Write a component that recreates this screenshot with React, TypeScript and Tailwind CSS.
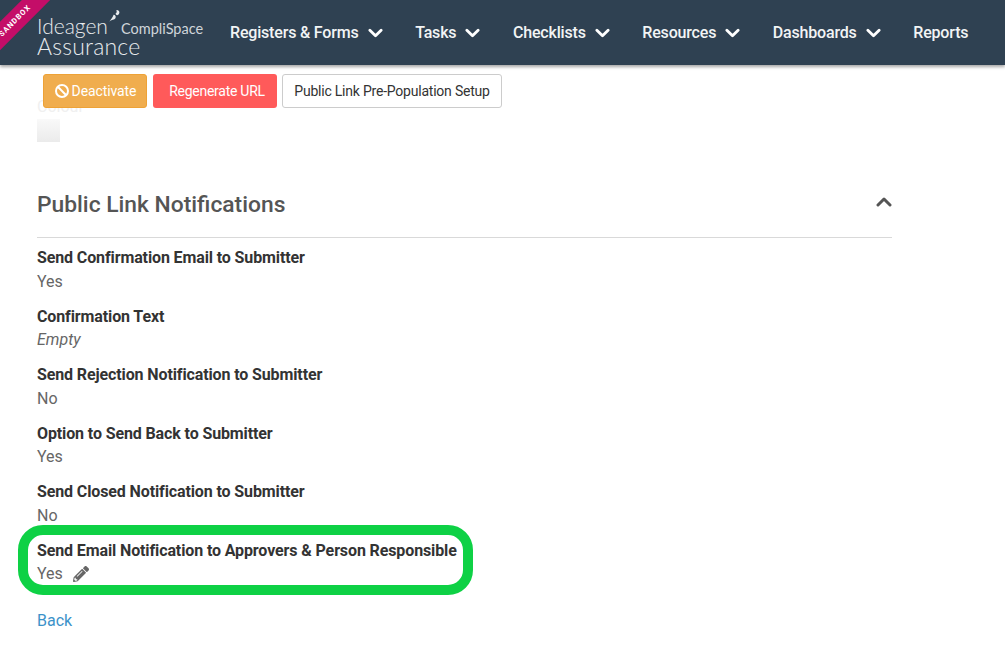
import React from "react";

const navItems: [string, boolean][] = [
  ["Registers & Forms", true],
  ["Tasks", true],
  ["Checklists", true],
  ["Resources", true],
  ["Dashboards", true],
  ["Reports", false],
];

const fields: [string, string][] = [
  ["Send Confirmation Email to Submitter", "Yes"],
  ["Confirmation Text", "Empty"],
  ["Send Rejection Notification to Submitter", "No"],
  ["Option to Send Back to Submitter", "Yes"],
  ["Send Closed Notification to Submitter", "No"],
  ["Send Email Notification to Approvers & Person Responsible", "Yes"],
];

function Chevron({ className }: { className: string }) {
  return (
    <svg viewBox="0 0 16 12" className={className} fill="none" stroke="currentColor" strokeWidth="3" strokeLinecap="round" strokeLinejoin="round">
      <path d="M2 3l6 6 6-6" />
    </svg>
  );
}

function Field({ label, value, last }: { label: string; value: string; last: boolean }) {
  return (
    <div className="h-[58.5px] pt-[1px]">
      <div className="text-[16px] leading-[23.5px] font-bold tracking-[-0.12px] text-[#333333]">{label}</div>
      <div className={`flex items-center text-[16px] leading-[23.5px] text-[#666666] ${value === "Empty" ? "italic" : ""}`}>
        {value}
        {last && (
          <svg viewBox="0 0 512 512" className="ml-[10px] h-[16px] w-[16px] text-[#666666]" fill="currentColor">
            <path d="M497.9 142.1l-46.1 46.1c-4.7 4.7-12.3 4.7-17 0l-111-111c-4.7-4.7-4.7-12.3 0-17l46.1-46.1c18.7-18.7 49.1-18.7 67.9 0l60.1 60.1c18.8 18.7 18.8 49.1 0 67.9zM284.2 99.8L21.6 362.4.4 483.9c-2.9 16.4 11.4 30.6 27.8 27.8l121.5-21.3 262.6-262.6c4.7-4.7 4.7-12.3 0-17l-111-111c-4.8-4.7-12.4-4.7-17.1 0zM124.1 339.9c-5.5-5.5-5.5-14.3 0-19.8l154-154c5.5-5.5 14.3-5.5 19.8 0s5.5 14.3 0 19.8l-154 154c-5.5 5.5-14.3 5.5-19.8 0zM88 424h48v36.3l-64.5 11.3-31.1-31.1L51.7 376H88v48z" />
          </svg>
        )}
      </div>
    </div>
  );
}

export default function App() {
  return (
    <div className="relative h-[654px] w-[1005px] overflow-hidden bg-white font-['Roboto',sans-serif]">
      <header className="relative flex h-[65px] items-center bg-[#2f4152] pl-[37px] shadow-[0_2px_3px_rgba(0,0,0,0.35)]">
        <div className="relative h-[65px] w-[193px] shrink-0 font-['Lato',sans-serif] font-light text-[#e8ebee]">
          <div className="absolute left-0 top-[16px] text-[21px] leading-[20px]">Ideagen</div>
          <svg viewBox="0 0 12 14" className="absolute left-[72px] top-[10px] h-[13px] w-[11px]" fill="#e8ebee">
            <path d="M8 0c3 0 4 2 3 4S8 6 7 4c1 0 2-2 1-4zM5 5c2 0 3 2 2 4S3 10 0 13c2-3 4-5 5-8z" />
          </svg>
          <div className="absolute left-[84px] top-[19px] text-[14.5px] leading-[20px] font-normal text-[#cfd5da]">CompliSpace</div>
          <div className="absolute left-0 top-[37px] text-[23px] leading-[19px] tracking-[0.2px]">Assurance</div>
        </div>
        <nav className="flex items-center">
          {navItems.map(([name, hasChevron]) => (
            <div key={name} className="mr-[32.6px] flex items-center text-[16px] font-medium tracking-[-0.18px] text-[#f2f4f5]">
              {name}
              {hasChevron && <Chevron className="ml-[9px] h-[12px] w-[15px] text-white" />}
            </div>
          ))}
        </nav>
      </header>

      <div className="absolute left-[-27px] top-[8px] flex h-[20px] w-[90px] -rotate-45 items-center justify-center bg-[#c40d68] pr-[8px] text-[7.5px] font-bold tracking-[1px] text-white">
        SANDBOX
      </div>

      <main className="pl-[37px] pr-[113px]">
        <div className="relative z-10 flex gap-[6px] pl-[6px] pt-[9px]">
          <button className="flex h-[34px] w-[104px] items-center justify-center rounded-[3px] border border-[#eea236] bg-[#f0ad4e] text-[14px] tracking-[-0.1px] text-white">
            <svg viewBox="0 0 16 16" className="mr-[2px] h-[16px] w-[16px]" fill="none" stroke="currentColor" strokeWidth="2">
              <circle cx="8" cy="8" r="6" />
              <path d="M3.8 3.8l8.4 8.4" />
            </svg>
            Deactivate
          </button>
          <button className="h-[34px] w-[124px] rounded-[3px] bg-[#ff5a5a] pl-[4px] text-[14px] tracking-[-0.27px] text-white">Regenerate URL</button>
          <button className="-ml-[1px] h-[34px] w-[220px] rounded-[3px] border border-[#cccccc] bg-white text-[14px] tracking-[-0.22px] text-[#333333]">
            Public Link Pre-Population Setup
          </button>
        </div>
        <div className="-mt-[13px] h-[24px] text-[16px] leading-[24px] text-[#f0f0f0]">Colour</div>
        <div className="h-[23px] w-[23px] bg-gradient-to-b from-[#f9f9f9] to-[#ebebeb]" />
        <section className="mt-[37px] flex h-[59px] items-center justify-between border-b border-[#d9d9d9] pb-[8px]">
          <h2 className="pt-[2px] text-[22.8px] font-medium text-[#555555]">Public Link Notifications</h2>
          <Chevron className="-mt-[4px] h-[12px] w-[16px] rotate-180 text-[#555555]" />
        </section>
        <div className="pt-[7px]">
          {fields.map(([label, value], i) => (
            <Field key={label} label={label} value={value} last={i === fields.length - 1} />
          ))}
        </div>
        <a className="mt-[13px] block text-[16px] leading-[24px] text-[#3c92c9]">Back</a>
      </main>

      <div className="pointer-events-none absolute left-[18px] top-[525px] h-[70px] w-[455px] rounded-[25px] border-[10px] border-[#0ed145]" />
    </div>
  );
}
